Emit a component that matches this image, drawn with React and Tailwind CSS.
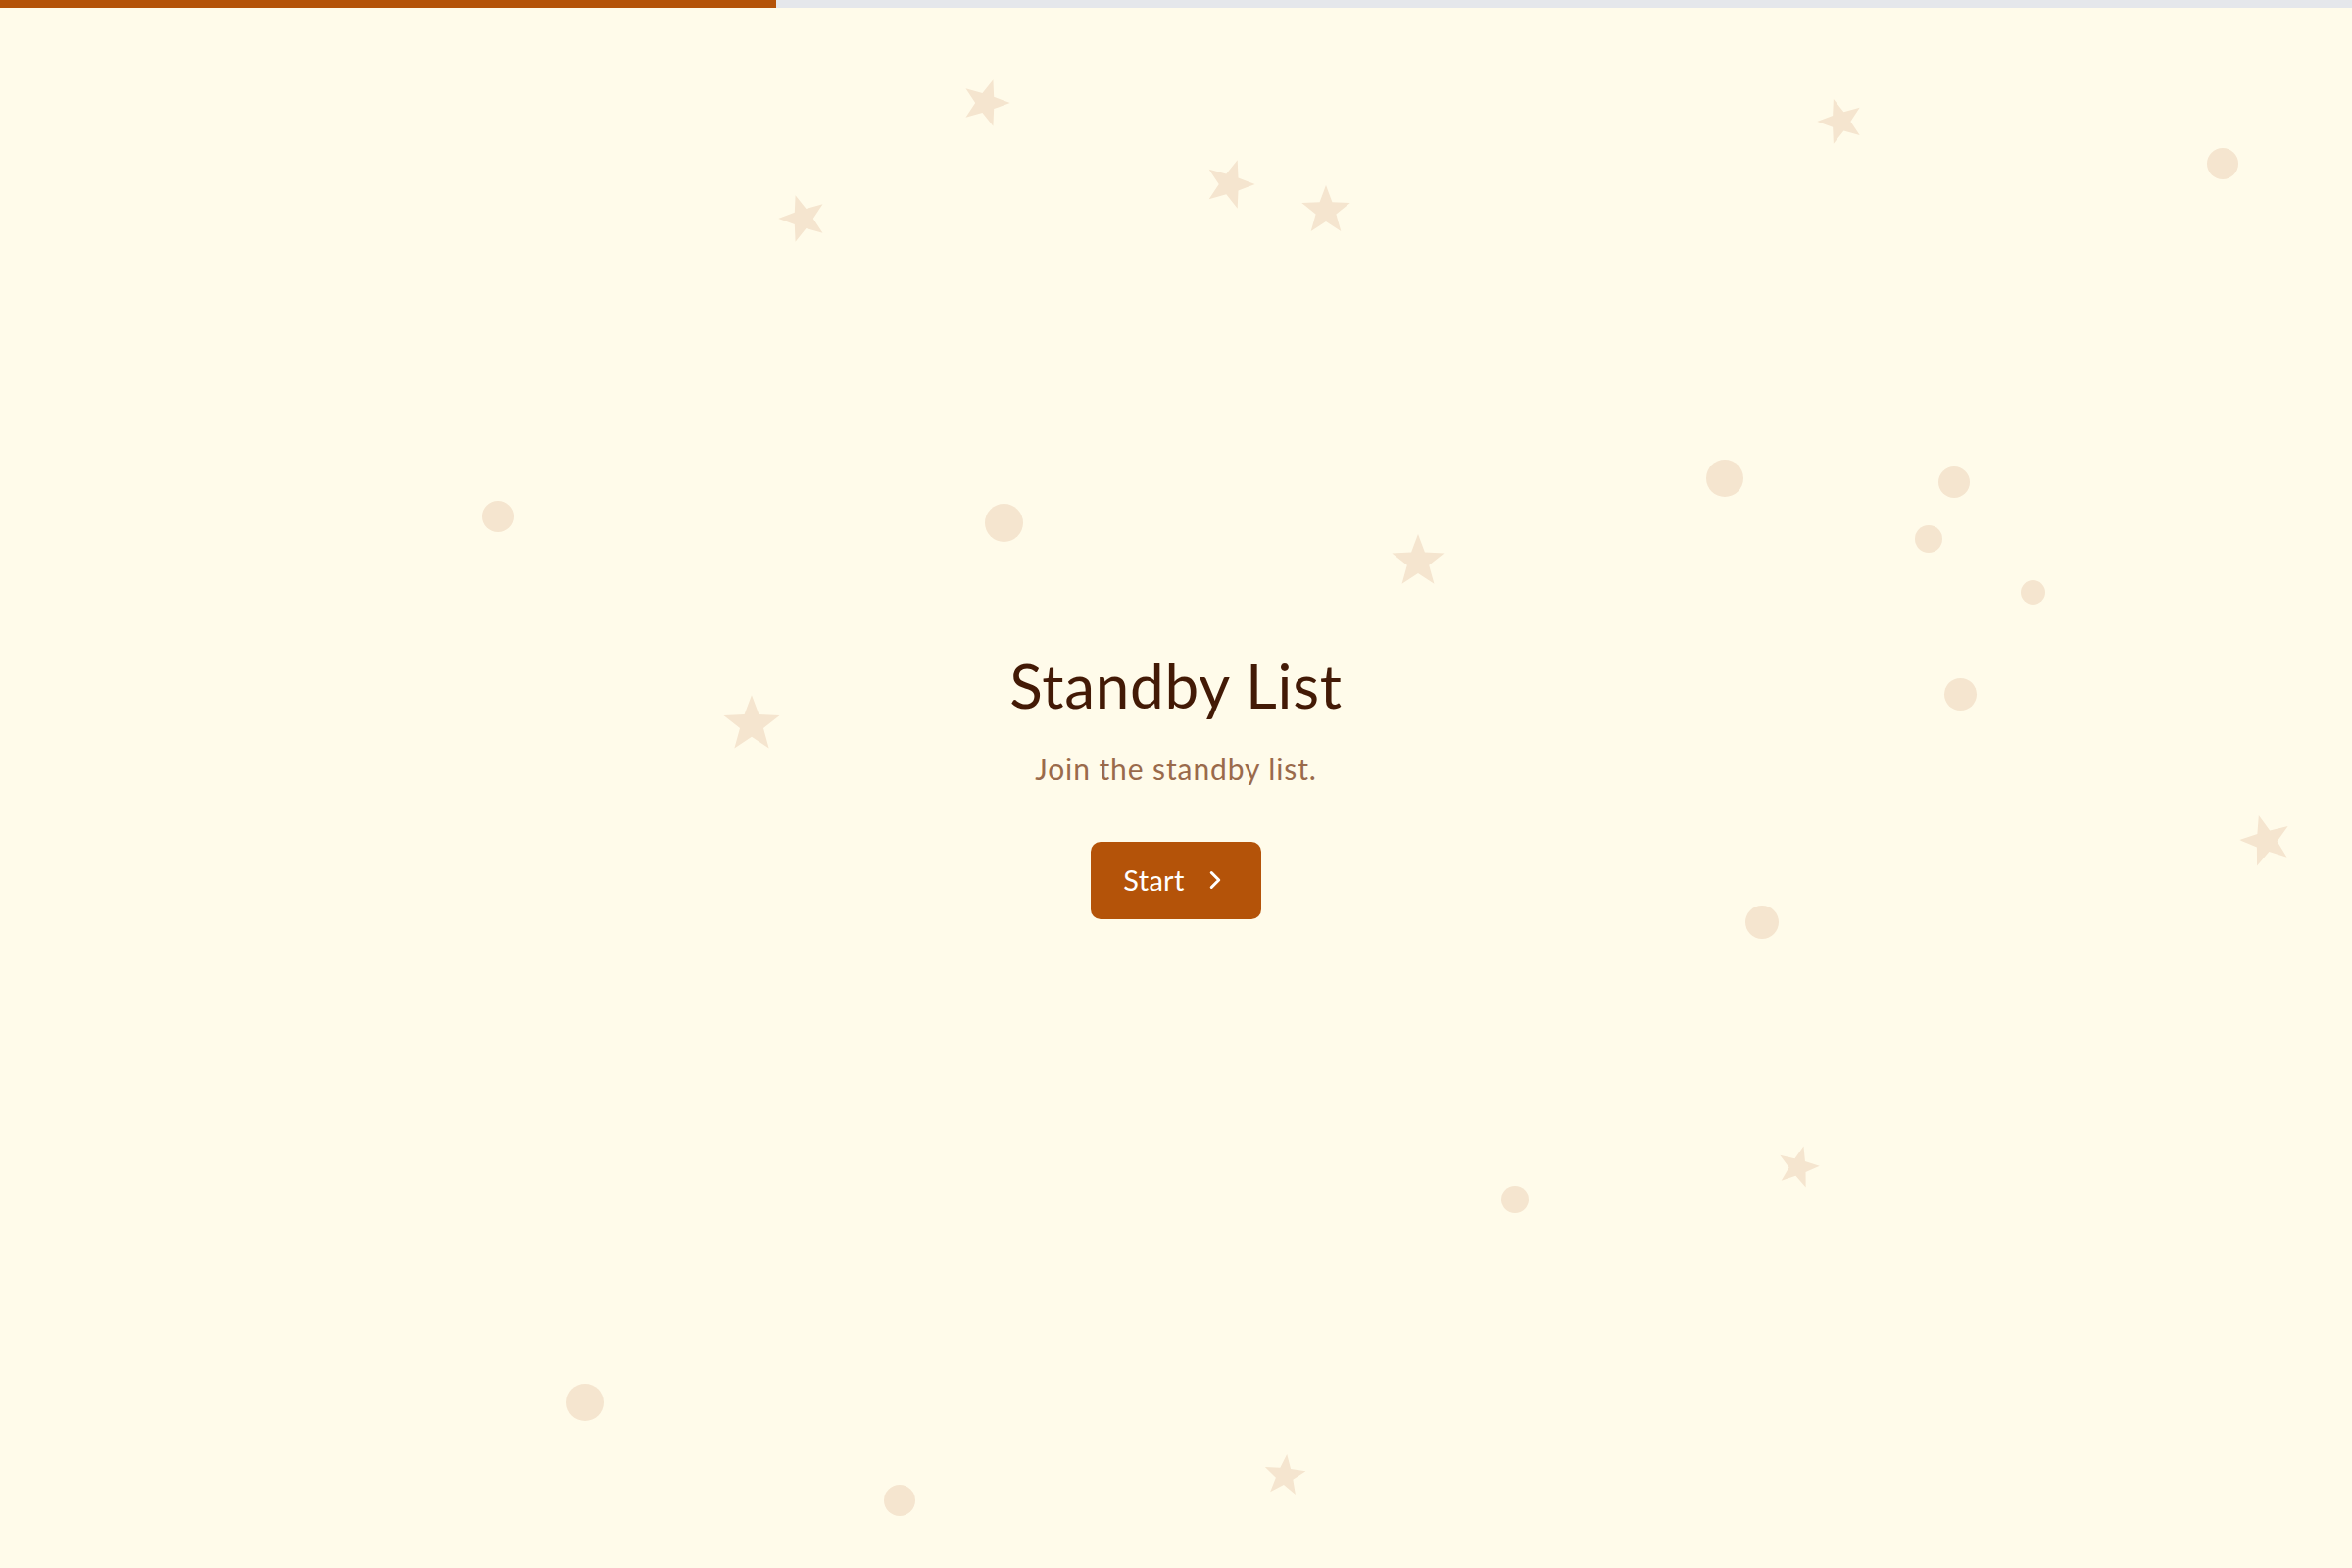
import { ChevronRight } from 'lucide-react';

// background decoration: [centerX, centerY, size, rotation]
const stars = [
  [1006, 104, 50, 18],
  [819, 222, 50, -18],
  [1255, 187, 52, 18],
  [1353, 214, 52, 0],
  [1878, 123, 48, -18],
  [767, 738, 60, 0],
  [1447, 572, 56, 0],
  [2312, 857, 54, -16],
  [1835, 1190, 44, 15],
  [1311, 1505, 44, 6],
];

// [centerX, centerY, diameter]
const dots = [
  [2268, 167, 32],
  [508, 527, 32],
  [1024, 533, 39],
  [1760, 488, 38],
  [1994, 492, 32],
  [1968, 550, 28],
  [2074, 604, 25],
  [2000, 708, 33],
  [1798, 941, 34],
  [1546, 1224, 28],
  [597, 1431, 38],
  [918, 1531, 32],
];

const starPoints = Array.from({ length: 10 }, (_, i) => {
  const r = i % 2 === 0 ? 50 : 21;
  const a = (Math.PI / 5) * i - Math.PI / 2;
  return `${(50 + r * Math.cos(a)).toFixed(2)},${(52 + r * Math.sin(a)).toFixed(2)}`;
}).join(' ');

function Star({ x, y, size, rotate }) {
  return (
    <svg
      viewBox="0 0 100 100"
      className="absolute"
      style={{
        left: x - size / 2,
        top: y - size / 2,
        width: size,
        height: size,
        transform: `rotate(${rotate}deg)`,
      }}
    >
      <polygon points={starPoints} fill="#f5e5cf" />
    </svg>
  );
}

export default function App() {
  return (
    <div className="relative min-h-screen overflow-hidden bg-[#fffbea] font-['Lato',sans-serif]">
      {/* progress */}
      <div className="fixed top-0 left-0 right-0 z-10 h-2 bg-[#e5e7eb]">
        <div className="h-full w-[33%] bg-[#b45309]" />
      </div>

      {/* decorations */}
      <div className="pointer-events-none absolute inset-0">
        {stars.map(([x, y, s, r], i) => (
          <Star key={`s${i}`} x={x} y={y} size={s} rotate={r} />
        ))}
        {dots.map(([x, y, d], i) => (
          <div
            key={`d${i}`}
            className="absolute rounded-full bg-[#f5e5cf]"
            style={{ left: x - d / 2, top: y - d / 2, width: d, height: d }}
          />
        ))}
      </div>

      <div className="relative flex min-h-screen flex-col items-center justify-center text-center">
        <h1 className="text-[62px] leading-[72px] font-normal tracking-[0.012em] text-[#431a06]">Standby List</h1>
        <p className="mt-[31px] text-[30px] leading-9 tracking-[0.03em] text-[#9a6a4b]">Join the standby list.</p>
        <button className="mt-[57px] flex h-[79px] items-center gap-[16px] rounded-[10px] bg-[#b45309] pl-[33px] pr-[32px] text-[29px] tracking-[0.01em] text-white">
          Start
          <ChevronRight className="h-[30px] w-[30px]" strokeWidth={2.4} />
        </button>
      </div>
    </div>
  );
}
